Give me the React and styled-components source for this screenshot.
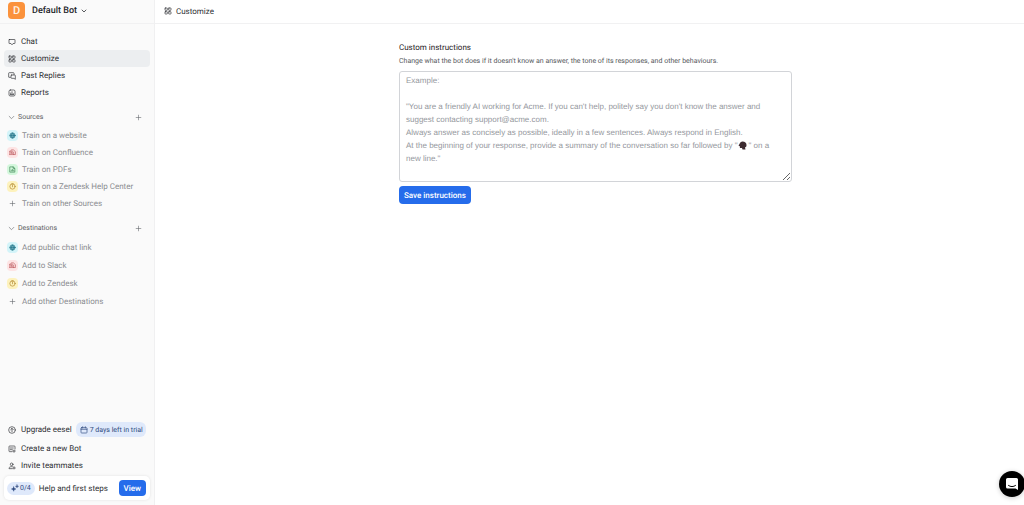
import React, { useState } from 'react';
import styled, { createGlobalStyle, css } from 'styled-components';

const GlobalStyle = createGlobalStyle`
  * {
    box-sizing: border-box;
  }
  body {
    margin: 0;
    background: #ffffff;
    color: #2d2f33;
    font-family: Roboto, 'Liberation Sans', sans-serif;
    font-size: 8px;
    text-rendering: geometricPrecision;
  }
  button {
    font-family: inherit;
    text-rendering: inherit;
  }
`;

const Page = styled.div`
  display: flex;
  min-height: 100vh;
`;

const Sidebar = styled.aside`
  display: flex;
  flex-direction: column;
  flex: 0 0 155px;
  min-width: 0;
  background: #fafafa;
  border-right: 1px solid #f0f0f1;
`;

const BotButton = styled.button`
  display: flex;
  align-items: center;
  gap: 4px;
  height: 24px;
  padding: 0 8px 2px;
  border: 0;
  border-bottom: 1px solid #f1f1f2;
  background: none;
  color: #232529;
  font-size: 9px;
  font-weight: 500;
`;

const BotAvatar = styled.span`
  width: 17px;
  height: 17px;
  margin-right: 3px;
  border-radius: 4px;
  background: #fb923c;
  color: #fff3e6;
  font-size: 11px;
  font-weight: 500;
  line-height: 17px;
  text-align: center;
`;

const Nav = styled.nav`
  display: flex;
  flex-direction: column;
  padding: 9px 4px 0;
`;

const NavLink = styled.a`
  display: flex;
  align-items: center;
  gap: 5px;
  height: ${props => props.$tall ? '18px' : '17px'};
  padding: 0 4px;
  border-radius: 4px;
  color: ${props => props.$muted ? '#8b8d91' : '#2d2f33'};
  background: ${props => props.$active ? '#eceef0' : 'transparent'};
  font-size: 8px;
  text-decoration: none;
  white-space: nowrap;
`;

const Section = styled.section`
  padding: 8px 4px 0;
`;

const SectionHeader = styled.div`
  display: flex;
  align-items: center;
  justify-content: space-between;
  height: 16px;
  padding: 0 8px 0 4px;
  margin-bottom: 2px;
`;

const SectionToggle = styled.button`
  display: flex;
  align-items: center;
  gap: 3px;
  padding: 0;
  border: 0;
  background: none;
  color: #5c5e63;
  font-size: 7px;
`;

const IconButton = styled.button`
  display: flex;
  padding: 0;
  border: 0;
  background: none;
  color: #63656a;
`;

const TONES = {
  cyan: css`background: #d3f4f9; color: #1d7186;`,
  red: css`background: #fde4e4; color: #b4454a;`,
  green: css`background: #d3f7dc; color: #2b7a45;`,
  yellow: css`background: #fdf2bd; color: #a87a1a;`,
  plain: css`color: #63656a;`,
};

const Tile = styled.span`
  display: flex;
  align-items: center;
  justify-content: center;
  width: 11px;
  height: 11px;
  margin: 0 -1px;
  border-radius: 4px;
  ${props => TONES[props.$tone]}
`;

const Footer = styled.div`
  display: flex;
  flex-direction: column;
  margin-top: auto;
  padding: 0 4px 5px;
`;

const UpgradeRow = styled.div`
  display: flex;
  align-items: center;
  margin-bottom: 2px;
`;

const TrialBadge = styled.span`
  display: flex;
  align-items: center;
  gap: 2px;
  height: 15px;
  padding: 0 3px 0 4px;
  border-radius: 6px;
  background: #dfe9fb;
  color: #2f4a80;
  font-size: 7px;
  white-space: nowrap;
`;

const StepsCard = styled.div`
  display: flex;
  align-items: center;
  gap: 4px;
  height: 24px;
  margin-top: 2px;
  padding: 0 4px 0 3px;
  border-radius: 5px;
  background: #ffffff;
  box-shadow: 0 0 3px rgba(0, 0, 0, 0.1);
  white-space: nowrap;
`;

const Progress = styled.span`
  display: flex;
  align-items: center;
  gap: 1px;
  height: 13px;
  padding: 0 4px;
  border-radius: 7px;
  background: #dfe9fb;
  color: #2f4a80;
  font-size: 7px;
`;

const PrimaryButton = styled.button`
  height: ${props => props.$small ? '16px' : '18px'};
  padding: 0 5px;
  border: 0;
  border-radius: 4px;
  background: #256ceb;
  color: #ffffff;
  font-size: 8px;
  font-weight: 500;
`;

const ViewButton = styled(PrimaryButton)`
  margin-left: auto;
`;

const Main = styled.main`
  flex: 1;
  min-width: 0;
`;

const TopBar = styled.header`
  display: flex;
  align-items: center;
  gap: 4px;
  height: 24px;
  padding: 0 9px 1px;
  border-bottom: 1px solid #f1f1f2;
`;

const Content = styled.div`
  padding: 18px 0 18px 12px;
`;

const Form = styled.form`
  width: 60%;
  max-width: 393px;
  margin: 0 auto;
`;

const Label = styled.label`
  display: block;
  color: #1f2124;
  font-size: 8px;
  line-height: 12px;
`;

const Hint = styled.p`
  margin: 1px 0 4px;
  color: #55585c;
  font-size: 7px;
  line-height: 12px;
`;

const Field = styled.div`
  position: relative;
  margin-bottom: 4px;
  font-family: 'Liberation Sans', sans-serif;
`;

const Instructions = styled.textarea`
  display: block;
  width: 100%;
  height: 111px;
  padding: 3px 6px;
  border: 1px solid #d2d4d8;
  border-radius: 3px;
  background: #ffffff;
  color: #2d2f33;
  font-family: inherit;
  font-size: 8px;
  line-height: 13px;
  resize: vertical;
`;

const Example = styled.div`
  position: absolute;
  inset: 0;
  padding: 3px 7px;
  overflow: hidden;
  color: #94979d;
  font-size: 8px;
  line-height: 13px;
  white-space: pre-wrap;
  pointer-events: none;
  svg {
    vertical-align: middle;
    margin: 0 1px;
  }
`;

const ChatLauncher = styled.button`
  position: fixed;
  right: -1px;
  bottom: 8px;
  display: flex;
  align-items: center;
  justify-content: center;
  width: 26px;
  height: 26px;
  padding: 0;
  border: 0;
  border-radius: 50%;
  background: #000000;
  box-shadow: 0 1px 5px rgba(0, 0, 0, 0.2);
`;

const ICONS = {
  chat: <path d="M4 4.5h16a1 1 0 0 1 1 1v10a1 1 0 0 1-1 1h-5l-3 4-3-4H4a1 1 0 0 1-1-1v-10a1 1 0 0 1 1-1z" />,
  grid: (
    <>
      <rect x="3" y="3" width="7" height="7" rx="1" />
      <rect x="14" y="3" width="7" height="7" rx="1" />
      <rect x="3" y="14" width="7" height="7" rx="1" />
      <rect x="14" y="14" width="7" height="7" rx="1" />
    </>
  ),
  replies: <path d="M7 16H3a1 1 0 0 1-1-1V4a2 2 0 0 1 2-2h12a2 2 0 0 1 2 2v4M11 9h9a2 2 0 0 1 2 2v11l-4-3h-7a2 2 0 0 1-2-2v-6a2 2 0 0 1 2-2z" />,
  reports: (
    <>
      <rect x="3" y="3" width="18" height="18" rx="4" />
      <path d="M8 16v-4M12 16V8M16 16v-2M7 17h10" />
    </>
  ),
  globe: (
    <>
      <circle cx="12" cy="12" r="9" fill="currentColor" fillOpacity="0.5" />
      <path d="M3 12h18M12 3c-5 5-5 13 0 18M12 3c5 5 5 13 0 18" />
    </>
  ),
  docs: <path d="M6 6a3 3 0 0 1 3-3h6l7 6v10h-6M2 8h10l4 3v8H2zM6 12h5M6 15h6" />,
  file: <path d="M4 3h10l6 5v13H4zM14 3v5h5M8 17v-3M12 17v-5M16 17v-3" />,
  clock: (
    <>
      <circle cx="12" cy="12" r="9" />
      <path d="M12 7v6M9 3h6" />
    </>
  ),
  plus: <path d="M12 4v16M4 12h16" />,
  chevron: <path d="M4 8l8 8 8-8" />,
  upgrade: (
    <>
      <circle cx="12" cy="12" r="10" />
      <path d="M12 17V7M8 11l4-4 4 4" />
    </>
  ),
  newBot: <path d="M21 12V5a2 2 0 0 0-2-2H5a2 2 0 0 0-2 2v13a2 2 0 0 0 2 2h7M7 9h9M7 14h6M18 15v7M14 18h8" />,
  invite: (
    <>
      <circle cx="11" cy="7" r="4" />
      <path d="M13 20H3v-1c0-3 3-5 8-5h2M18 14v7M15 18h7" />
    </>
  ),
  calendar: <path d="M5 5h14a2 2 0 0 1 2 2v12a2 2 0 0 1-2 2H5a2 2 0 0 1-2-2V7a2 2 0 0 1 2-2zM3 10h18M8 2v4M16 2v4" />,
  sparkle: <path fill="currentColor" d="M8 8l2 5 5 2-5 2-2 5-2-5-5-2 5-2zM18 2l1 4 4 1-4 1-1 4-1-4-4-1 4-1z" />,
};

const Icon = ({ name, size = 8, weight = 2 }) => (
  <svg
    width={size}
    height={size}
    viewBox="0 0 24 24"
    fill="none"
    stroke="currentColor"
    strokeWidth={weight}
    strokeLinecap="round"
    strokeLinejoin="round"
    aria-hidden="true"
  >
    {ICONS[name]}
  </svg>
);

const HeadIcon = () => (
  <svg width="9" height="9" viewBox="0 0 18 18" aria-hidden="true">
    <path
      d="M9 1c5 0 8 3 8 7 0 3-1 4-3 5l1 4H9l-1-3H5c-1 0-2-1-1-3L1 9l2-3c1-3 3-5 6-5z"
      fill="#3d2b30"
    />
  </svg>
);

const pages = [
  { icon: 'chat', label: 'Chat' },
  { icon: 'grid', label: 'Customize', active: true },
  { icon: 'replies', label: 'Past Replies' },
  { icon: 'reports', label: 'Reports' },
];

const sources = [
  { icon: 'globe', tone: 'cyan', label: 'Train on a website' },
  { icon: 'docs', tone: 'red', label: 'Train on Confluence' },
  { icon: 'file', tone: 'green', label: 'Train on PDFs' },
  { icon: 'clock', tone: 'yellow', label: 'Train on a Zendesk Help Center' },
  { icon: 'plus', tone: 'plain', label: 'Train on other Sources' },
];

const destinations = [
  { icon: 'globe', tone: 'cyan', label: 'Add public chat link' },
  { icon: 'docs', tone: 'red', label: 'Add to Slack' },
  { icon: 'clock', tone: 'yellow', label: 'Add to Zendesk' },
  { icon: 'plus', tone: 'plain', label: 'Add other Destinations' },
];

const example = `Example:

"You are a friendly AI working for Acme. If you can't help, politely say you don't know the answer and suggest contacting support@acme.com.
Always answer as concisely as possible, ideally in a few sentences. Always respond in English.
At the beginning of your response, provide a summary of the conversation so far followed by "`;

const NavSection = ({ title, items, tall }) => (
  <Section>
    <SectionHeader>
      <SectionToggle type="button">
        <Icon name="chevron" size={7} />
        {title}
      </SectionToggle>
      <IconButton type="button" aria-label={`Add to ${title}`}>
        <Icon name="plus" size={7} />
      </IconButton>
    </SectionHeader>
    {items.map(item => (
      <NavLink key={item.label} href="#" $muted $tall={tall}>
        <Tile $tone={item.tone}>
          <Icon name={item.icon} size={7} />
        </Tile>
        {item.label}
      </NavLink>
    ))}
  </Section>
);

export default function App() {
  const [instructions, setInstructions] = useState('');

  return (
    <Page>
      <GlobalStyle />
      <Sidebar>
        <BotButton type="button">
          <BotAvatar>D</BotAvatar>
          Default Bot
          <Icon name="chevron" size={6} weight={3} />
        </BotButton>
        <Nav>
          {pages.map(page => (
            <NavLink key={page.label} href="#" $active={page.active}>
              <Icon name={page.icon} />
              {page.label}
            </NavLink>
          ))}
        </Nav>
        <NavSection title="Sources" items={sources} />
        <NavSection title="Destinations" items={destinations} tall />
        <Footer>
          <UpgradeRow>
            <NavLink href="#">
              <Icon name="upgrade" />
              Upgrade eesel
            </NavLink>
            <TrialBadge>
              <Icon name="calendar" />
              7 days left in trial
            </TrialBadge>
          </UpgradeRow>
          <NavLink href="#">
            <Icon name="newBot" />
            Create a new Bot
          </NavLink>
          <NavLink href="#">
            <Icon name="invite" />
            Invite teammates
          </NavLink>
          <StepsCard>
            <Progress>
              <Icon name="sparkle" weight={1} />
              0/4
            </Progress>
            Help and first steps
            <ViewButton type="button" $small>View</ViewButton>
          </StepsCard>
        </Footer>
      </Sidebar>
      <Main>
        <TopBar>
          <Icon name="grid" />
          Customize
        </TopBar>
        <Content>
          <Form>
            <Label htmlFor="instructions">Custom instructions</Label>
            <Hint id="instructions-hint">
              Change what the bot does if it doesn't know an answer, the tone of its responses, and other behaviours.
            </Hint>
            <Field>
              <Instructions
                id="instructions"
                aria-describedby="instructions-hint"
                value={instructions}
                onChange={event => setInstructions(event.target.value)}
              />
              {!instructions && (
                <Example>
                  {example}
                  <HeadIcon />
                  {'" on a new line."'}
                </Example>
              )}
            </Field>
            <PrimaryButton type="button">Save instructions</PrimaryButton>
          </Form>
        </Content>
      </Main>
      <ChatLauncher type="button" aria-label="Open chat">
        <svg width="14" height="14" viewBox="0 0 28 28" aria-hidden="true">
          <path d="M5 2h18a3 3 0 0 1 3 3v21l-5-3H5a3 3 0 0 1-3-3V5a3 3 0 0 1 3-3z" fill="#ffffff" />
          <path d="M7 17c4 3 10 3 14 0" fill="none" stroke="#000000" strokeWidth="2" strokeLinecap="round" />
        </svg>
      </ChatLauncher>
    </Page>
  );
}
